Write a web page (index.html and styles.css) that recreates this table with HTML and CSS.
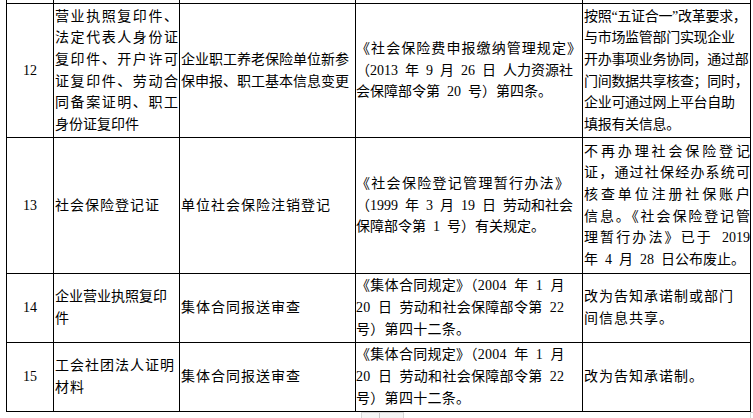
FILE: index.html
```html
<!DOCTYPE html>
<html lang="zh-CN">
<head>
<meta charset="utf-8">
<title>证明材料清理表</title>
<link rel="stylesheet" href="styles.css">
</head>
<body>
<div class="sheet">
  <div class="cell stub"></div><div class="cell stub"></div><div class="cell stub"></div><div class="cell stub"></div><div class="cell stub"></div>

  <div class="cell num">12</div>
  <div class="cell c2">
    <span class="ln j">营业执照复印件、</span>
    <span class="ln j">法定代表人身份证</span>
    <span class="ln j">复印件、开户许可</span>
    <span class="ln j">证复印件、劳动合</span>
    <span class="ln j">同备案证明、职工</span>
    <span class="ln">身份证复印件</span>
  </div>
  <div class="cell c3">
    <span class="ln">企业职工养老保险单位新参</span>
    <span class="ln">保申报、职工基本信息变更</span>
  </div>
  <div class="cell c4">
    <span class="ln j">《社会保险费申报缴纳管理规定》</span>
    <span class="ln">（2013 年 9 月 26 日 人力资源社</span>
    <span class="ln">会保障部令第 20 号）第四条。</span>
  </div>
  <div class="cell c5 tight">
    <span class="ln">按照“五证合一”改革要求，</span>
    <span class="ln">与市场监管部门实现企业</span>
    <span class="ln">开办事项业务协同，通过部</span>
    <span class="ln">门间数据共享核查；同时，</span>
    <span class="ln">企业可通过网上平台自助</span>
    <span class="ln">填报有关信息。</span>
  </div>

  <div class="cell num">13</div>
  <div class="cell c2 wide"><span class="ln">社会保险登记证</span></div>
  <div class="cell c3 wide"><span class="ln">单位社会保险注销登记</span></div>
  <div class="cell c4">
    <span class="ln open">《社会保险登记管理暂行办法》</span>
    <span class="ln">（1999 年 3 月 19 日 劳动和社会</span>
    <span class="ln">保障部令第 1 号）有关规定。</span>
  </div>
  <div class="cell c5">
    <span class="ln j">不再办理社会保险登记</span>
    <span class="ln j">证，通过社保经办系统可</span>
    <span class="ln j">核查单位注册社保账户</span>
    <span class="ln j">信息。《社会保险登记管</span>
    <span class="ln j">理暂行办法》已于 2019</span>
    <span class="ln">年 4 月 28 日公布废止。</span>
  </div>

  <div class="cell num">14</div>
  <div class="cell c2">
    <span class="ln">企业营业执照复印</span>
    <span class="ln">件</span>
  </div>
  <div class="cell c3 wide"><span class="ln">集体合同报送审查</span></div>
  <div class="cell c4 loose">
    <span class="ln">《集体合同规定》（2004 年 1 月</span>
    <span class="ln">20 日 劳动和社会保障部令第 22</span>
    <span class="ln">号）第四十二条。</span>
  </div>
  <div class="cell c5 wide">
    <span class="ln">改为告知承诺制或部门</span>
    <span class="ln">间信息共享。</span>
  </div>

  <div class="cell num">15</div>
  <div class="cell c2 wide">
    <span class="ln">工会社团法人证明</span>
    <span class="ln">材料</span>
  </div>
  <div class="cell c3 wide"><span class="ln">集体合同报送审查</span></div>
  <div class="cell c4 loose">
    <span class="ln">《集体合同规定》（2004 年 1 月</span>
    <span class="ln">20 日 劳动和社会保障部令第 22</span>
    <span class="ln">号）第四十二条。</span>
  </div>
  <div class="cell c5 wide"><span class="ln">改为告知承诺制。</span></div>
</div>
<div class="below">
  <div class="handle"><span class="handle-part"></span><span class="handle-part last"></span></div>
  <div class="corner"></div>
</div>
</body>
</html>
```
FILE: styles.css
```css
html, body {
  margin: 0;
  padding: 0;
  background: #fff;
}

body {
  width: 753px;
  height: 418px;
  overflow: hidden;
  font-family: "Liberation Serif", "Noto Sans CJK SC", serif;
  font-size: 14px;
  color: #000;
}

.sheet {
  display: grid;
  grid-template-columns: 46px 125px 175px 226px 167px;
  grid-template-rows: 3px 133px 135px 68px 68px;
  gap: 1px;
  width: max-content;
  margin-left: 6px;
  background: #000;
  border: 1px solid #000;
  border-top: 0;
}

.cell {
  background: #fff;
  display: flex;
  flex-direction: column;
  justify-content: center;
  padding: 0 1px;
  line-height: 21.6px;
  word-spacing: 3.5px;
  overflow: hidden;
}

.stub {
  padding: 0;
}

.num {
  align-items: center;
  font-size: 14px;
}

.c4 {
  padding: 0 1px 0 0;
}

.c4.loose {
  line-height: 22px;
}

.c4.loose .ln {
  letter-spacing: 0.3px;
}

.c5 {
  padding: 0 0 0 1px;
}

.ln {
  display: block;
  white-space: nowrap;
}

.j {
  text-align: justify;
  text-align-last: justify;
}

.wide .ln {
  letter-spacing: 1px;
}

.open {
  letter-spacing: 1.3px;
}

.tight .ln {
  letter-spacing: -0.3px;
}

.below {
  display: flex;
  height: 6px;
}

.handle {
  display: flex;
  margin-left: 361px;
  width: 43px;
  height: 6px;
  border: 1px solid #d6d6d6;
  border-bottom: 0;
  background: #f5f5f5;
  box-sizing: border-box;
}

.handle-part {
  width: 17px;
  border-right: 1px solid #c8c8c8;
}

.handle-part.last {
  border-right: 0;
}

.corner {
  margin-left: auto;
  width: 3px;
  height: 6px;
  border-left: 1px solid #d0d0d0;
  border-top: 1px solid #d0d0d0;
  box-sizing: border-box;
}
```
